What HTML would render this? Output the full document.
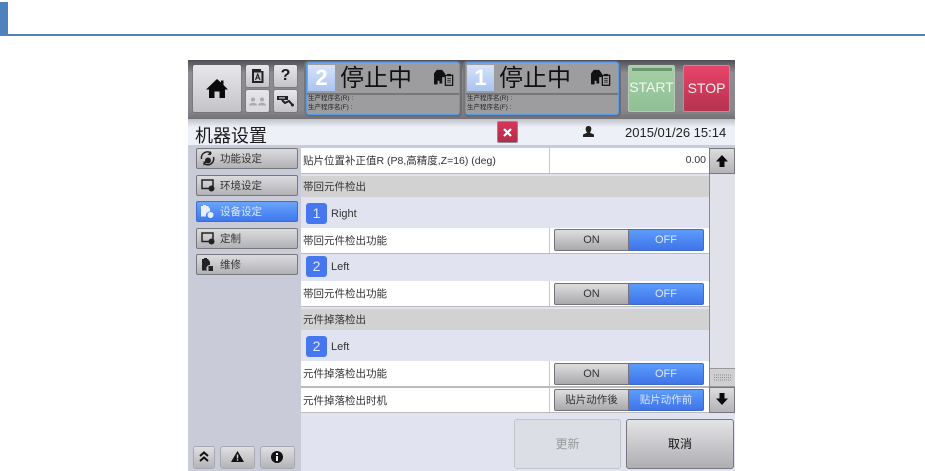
<!DOCTYPE html>
<html><head><meta charset="utf-8">
<style>
html,body{margin:0;padding:0;background:#fff}
body{width:925px;height:471px;overflow:hidden;position:relative;font-family:"Liberation Sans","Noto Sans CJK SC",sans-serif;color:#222}
div,span{position:absolute;box-sizing:border-box;white-space:nowrap}
svg{position:absolute;overflow:visible}
.g{background:linear-gradient(#e8e8ec,#c4c4c8);border-radius:2px;box-shadow:0 0 0 1px rgba(90,90,90,.3)}
.side{left:196px;width:102px;height:21px;background:linear-gradient(#dcdcdf,#b2b2b6);border:1px solid #77777c;border-radius:2px;font-size:10.500px;line-height:20px;padding-left:23px;color:#333}
.side.on{background:linear-gradient(#6aa4fb,#3e78ec);border-color:#3d6fc4;color:#dfe9fb}
.lab{left:303px;font-size:10.500px;color:#333;line-height:26px;height:25px}
.w{left:301px;width:408px;background:#fff;height:25px;border-bottom:1px solid #bbb}
.w i{position:absolute;left:248px;top:0;bottom:0;width:1px;background:#c8c8c8}
.hd{left:301px;width:408px;background:#d2d2d2;height:21px;font-size:10.500px;line-height:22px;padding-left:2px;color:#333}
.num{left:306px;width:21px;height:21px;background:#4677ee;border-radius:3px;color:#dfe8fb;font-size:14px;line-height:21px;text-align:center}
.nl{left:331px;font-size:11px;color:#333;line-height:14px}
.tg{width:75px;height:22px;text-align:center;line-height:20px;font-size:11px}
.tg.a{left:554px;background:linear-gradient(#dedee0,#a9a9ad);border:1px solid #737378;border-radius:2px 0 0 2px;color:#333}
.tg.b{left:629px;background:linear-gradient(#5d9cfb,#3f74ea);border:1px solid #3f6ec0;border-left:0;border-radius:0 2px 2px 0;color:#dbe7fb}
.panel{top:62px;height:53px;width:154px;background:#9d9d9f;border:1px solid #5a98e0;border-radius:3px;box-shadow:1px 1px 0 1px #6c6c70,-1px 0 0 1px #76767a}
.big{top:2px;left:33px;font-size:24px;line-height:28px;color:#111}
.pn{left:1px;top:2px;width:27px;height:26px;background:linear-gradient(#d6e2f8,#a9c4f0);color:#fff;font-size:22px;font-weight:bold;line-height:26px;text-align:center}
.pl{left:0;right:0;top:30px;height:2px;background:#77777a}
.ps{left:1px;font-size:6.500px;line-height:8px;color:#222}
#app{left:0;top:0;width:925px;height:471px;filter:blur(.35px)}
</style></head><body>
<div style="left:0;top:2px;width:8px;height:33px;background:#4f81bd"></div>
<div style="left:0;top:34px;width:925px;height:2px;background:#4f81bd"></div>
<div id="app">
<div style="left:188px;top:60px;width:547px;height:411px;background:#e1e4f0"></div>
<div style="left:188px;top:60px;width:547px;height:59px;background:linear-gradient(#4e4e54,#8c8c91 22%,#88888c 85%,#727276)"></div>
<div style="left:188px;top:119px;width:547px;height:27px;background:linear-gradient(#bfc1c9,#eef0f7 30%,#eef0f7)"></div>
<div style="left:188px;top:145px;width:113px;height:326px;background:#c9ccd8"></div>
<div style="left:301px;top:145px;width:434px;height:3px;background:#c9ccd8"></div>

<div class="g" style="left:193px;top:65px;width:48px;height:47px"></div>
<svg style="left:207px;top:79px" width="20" height="20" viewBox="0 0 20 20"><path d="M10 0L14 3.500V1.500H16.500V6L21 10.500H18V19H12.500V12.500H7.500V19H2V10.500H-1Z" fill="#0a0a0a"/></svg>
<div class="g" style="left:246px;top:65px;width:23px;height:22px"></div>
<svg style="left:252px;top:69px" width="12" height="14" viewBox="0 0 12 14"><path d="M0 0H9V2H11.500V14H0Z" fill="#222"/><rect x="2" y="3.500" width="7.500" height="8.500" fill="#ccc"/><path d="M3.500 11L5.700 5L8 11M4.300 9H7.200" fill="none" stroke="#222" stroke-width="1.100"/></svg>
<div class="g" style="left:274px;top:65px;width:23px;height:22px;font-weight:bold;font-size:16px;line-height:21px;text-align:center;color:#1a1a1a">?</div>
<div class="g" style="left:246px;top:90px;width:23px;height:22px;background:linear-gradient(#e6e6e9,#d8d8dc)"></div>
<svg style="left:249px;top:97px" width="17" height="9" viewBox="0 0 17 9"><circle cx="4" cy="2.500" r="2" fill="#aaa"/><path d="M0 8.500C0 5 8 5 8 8.500Z" fill="#aaa"/><circle cx="13" cy="2.500" r="2" fill="#aaa"/><path d="M9 8.500C9 5 17 5 17 8.500Z" fill="#aaa"/></svg>
<div class="g" style="left:274px;top:90px;width:23px;height:22px"></div>
<svg style="left:277px;top:96px" width="18" height="11" viewBox="0 0 18 11"><rect x="0" y="0" width="11" height="4" fill="#222"/><rect x="2" y="1.200" width="6" height="1.500" fill="#aaa"/><path d="M5 4L8 7L12 5L15 8.500" fill="none" stroke="#222" stroke-width="2"/><circle cx="15.500" cy="9" r="1.500" fill="#222"/></svg>

<div class="panel" style="left:306px">
<div class="pn">2</div><div class="big">停止中</div>
<svg style="left:127px;top:5px" width="20" height="20" viewBox="0 0 22 20"><path d="M0 15V5L3 1H9L12 5V9H9V16H6V13H4V17H0Z" fill="#111"/><rect x="12.500" y="7" width="8" height="11" fill="none" stroke="#111" stroke-width="1.400"/><rect x="14.500" y="5.500" width="4" height="2.500" fill="#111"/><path d="M14.500 10.500H18.500M14.500 12.500H18.500M14.500 14.500H18.500" stroke="#111" stroke-width=".8"/></svg>
<div class="pl"></div>
<div class="ps" style="top:32px">生产程序名(R) :</div><div class="ps" style="top:41px">生产程序名(F) :</div>
</div>
<div class="panel" style="left:465px">
<div class="pn">1</div><div class="big">停止中</div>
<svg style="left:125px;top:5px" width="20" height="20" viewBox="0 0 22 20"><path d="M0 15V5L3 1H9L12 5V9H9V16H6V13H4V17H0Z" fill="#111"/><rect x="12.500" y="7" width="8" height="11" fill="none" stroke="#111" stroke-width="1.400"/><rect x="14.500" y="5.500" width="4" height="2.500" fill="#111"/><path d="M14.500 10.500H18.500M14.500 12.500H18.500M14.500 14.500H18.500" stroke="#111" stroke-width=".8"/></svg>
<div class="pl"></div>
<div class="ps" style="top:32px">生产程序名(R) :</div><div class="ps" style="top:41px">生产程序名(F) :</div>
</div>

<div style="left:628px;top:65px;width:47px;height:47px;background:linear-gradient(#a6d0a6,#8fbf94);border:1px solid #b9c8b9;border-radius:2px"></div>
<div style="left:632px;top:68px;width:40px;height:3px;background:#6d9473"></div>
<div style="left:628px;top:79px;width:47px;color:#f2f7f2;font-size:14px;line-height:16px;text-align:center">START</div>
<div style="left:683px;top:65px;width:47px;height:47px;background:linear-gradient(#e8446a,#b5324f);border:1px solid #c88;border-radius:2px;color:#fbeef0;font-size:14px;line-height:44px;text-align:center">STOP</div>

<div style="left:195px;top:125px;font-size:18px;line-height:22px;color:#1a1a1a">机器设置</div>
<div style="left:497px;top:121px;width:21px;height:22px;background:linear-gradient(#d8355a,#b32c48);border:1px solid #8b8b90;border-radius:2px"></div>
<svg style="left:503px;top:128px" width="9" height="9" viewBox="0 0 9 9"><path d="M1 1L8 8M8 1L1 8" stroke="#fff" stroke-width="2.200"/></svg>
<svg style="left:583px;top:126px" width="11" height="11" viewBox="0 0 11 11"><path d="M5.500 0C8 0 8.500 2 8.300 3.500C8 5.500 7 6.300 7 6.800L11 8.500V11H0V8.500L4 6.800C4 6.300 3 5.500 2.700 3.500C2.500 2 3 0 5.500 0Z" fill="#222"/></svg>
<div style="left:625px;top:125px;font-size:13px;line-height:16px;color:#222">2015/01/26 15:14</div>

<div class="side" style="top:148px">功能设定</div>
<svg style="left:200px;top:151px" width="15" height="15" viewBox="0 0 15 15"><path d="M1.500 8A6 6 0 0 1 11.500 2.500M13.500 6A6 6 0 0 1 3.500 12" fill="none" stroke="#222" stroke-width="1.500"/><path d="M11 0V4H7.500Z M3.500 15V10.500H7Z" fill="#222"/><circle cx="8" cy="9.500" r="3" fill="#222"/></svg>
<div class="side" style="top:175px">环境设定</div>
<svg style="left:201px;top:179px" width="14" height="13" viewBox="0 0 14 13"><rect x="1" y="1" width="11" height="8.500" fill="none" stroke="#222" stroke-width="1.500"/><circle cx="10.500" cy="9.500" r="3" fill="#222"/></svg>
<div class="side on" style="top:201px">设备设定</div>
<svg style="left:200px;top:204px" width="14" height="15" viewBox="0 0 14 15"><path d="M1 2H3V1H6V2H8L10 5V7.500A4 4 0 0 0 6 12.500H1Z" fill="#e8f0fc"/><circle cx="10.500" cy="11" r="3" fill="#e8f0fc"/></svg>
<div class="side" style="top:228px">定制</div>
<svg style="left:201px;top:232px" width="14" height="13" viewBox="0 0 14 13"><rect x="1" y="1" width="11" height="8.500" fill="none" stroke="#222" stroke-width="1.500"/><circle cx="10.500" cy="9.500" r="3" fill="#222"/></svg>
<div class="side" style="top:254px">维修</div>
<svg style="left:201px;top:258px" width="13" height="14" viewBox="0 0 13 14"><path d="M1 1H3V0H6V1H7L9 4V7A3.500 3.500 0 0 0 6 12.500H1Z" fill="#222"/><rect x="7.500" y="8" width="4.500" height="5" fill="#222"/></svg>

<div class="g" style="left:194px;top:447px;width:20px;height:21px;background:linear-gradient(#e0e0e3,#b4b4b8)"></div>
<svg style="left:199px;top:451px" width="10" height="11" viewBox="0 0 10 11"><path d="M1 5L5 1.500L9 5M1 10L5 6.500L9 10" fill="none" stroke="#111" stroke-width="2"/></svg>
<div class="g" style="left:221px;top:447px;width:33px;height:21px;background:linear-gradient(#e0e0e3,#b4b4b8)"></div>
<svg style="left:231px;top:451px" width="13" height="11" viewBox="0 0 13 11"><path d="M6.500 0L13 11H0Z" fill="#111"/><rect x="5.800" y="3.500" width="1.400" height="4" fill="#ddd"/><rect x="5.800" y="8.300" width="1.400" height="1.400" fill="#ddd"/></svg>
<div class="g" style="left:261px;top:447px;width:33px;height:21px;background:linear-gradient(#e0e0e3,#b4b4b8)"></div>
<svg style="left:271px;top:451px" width="12" height="12" viewBox="0 0 12 12"><circle cx="6" cy="6" r="6" fill="#111"/><rect x="5" y="2" width="2" height="2" fill="#eee"/><rect x="5" y="5" width="2" height="5" fill="#eee"/></svg>

<div class="w" style="top:148px;height:26px"><i></i></div>
<div class="lab" style="top:148px">贴片位置补正值R (P8,高精度,Z=16) (deg)</div>
<div style="left:660px;top:148px;width:46px;text-align:right;font-size:10.500px;line-height:25px;color:#333">0.00</div>

<div class="hd" style="top:176px">帯回元件检出</div>
<div class="num" style="top:203px">1</div><div class="nl" style="top:207px">Right</div>
<div class="w" style="top:228px;height:26px"><i></i></div>
<div class="lab" style="top:228px">帯回元件检出功能</div>
<div class="tg a" style="top:229px">ON</div><div class="tg b" style="top:229px">OFF</div>

<div class="num" style="top:256px">2</div><div class="nl" style="top:260px">Left</div>
<div class="w" style="top:281px;height:26px"><i></i></div>
<div class="lab" style="top:281px">帯回元件检出功能</div>
<div class="tg a" style="top:283px">ON</div><div class="tg b" style="top:283px">OFF</div>

<div class="hd" style="top:309px">元件掉落检出</div>
<div class="num" style="top:336px">2</div><div class="nl" style="top:340px">Left</div>
<div class="w" style="top:361px;height:27px;border-bottom:2px solid #bbb"><i></i></div>
<div class="lab" style="top:361px">元件掉落检出功能</div>
<div class="tg a" style="top:363px">ON</div><div class="tg b" style="top:363px">OFF</div>
<div class="w" style="top:388px;height:25px"><i></i></div>
<div class="lab" style="top:388px">元件掉落检出时机</div>
<div class="tg a" style="top:389px;font-size:10.500px">贴片动作後</div><div class="tg b" style="top:389px;font-size:10.500px">贴片动作前</div>

<div style="left:709px;top:148px;width:26px;height:265px;background:#e1e1e9;border-left:1px solid #8a8a8e"></div>
<div style="left:709px;top:148px;width:26px;height:26px;background:linear-gradient(#dcdcdf,#b4b4b8);border:1px solid #77777c"></div>
<svg style="left:716px;top:155px" width="12" height="12" viewBox="0 0 12 12"><path d="M6 0L12 6.500H8.500V12H3.500V6.500H0Z" fill="#0a0a0a"/></svg>
<div style="left:709px;top:368px;width:26px;height:19px;background:#cfcfd2;border-top:1px solid #999;border-bottom:1px solid #999;border-left:1px solid #8a8a8e"></div>
<svg style="left:714px;top:374px" width="17" height="7" viewBox="0 0 17 7"><path d="M0 1H17M0 3.500H17M0 6H17" stroke="#8a8a8a" stroke-width="1" stroke-dasharray="1 1"/></svg>
<div style="left:709px;top:387px;width:26px;height:26px;background:linear-gradient(#dcdcdf,#b4b4b8);border:1px solid #77777c"></div>
<svg style="left:716px;top:393px" width="12" height="12" viewBox="0 0 12 12"><path d="M3.500 0H8.500V5.500H12L6 12L0 5.500H3.500Z" fill="#0a0a0a"/></svg>

<div style="left:514px;top:419px;width:107px;height:50px;background:#dcdee6;border:1px solid #c2c3c9;border-radius:3px;color:#999;font-size:12px;line-height:48px;text-align:center">更新</div>
<div style="left:626px;top:419px;width:108px;height:50px;background:linear-gradient(#e4e4e7,#aeaeb2);border:1px solid #77777c;border-radius:3px;color:#111;font-size:12px;line-height:48px;text-align:center">取消</div>
</div>
</body></html>
